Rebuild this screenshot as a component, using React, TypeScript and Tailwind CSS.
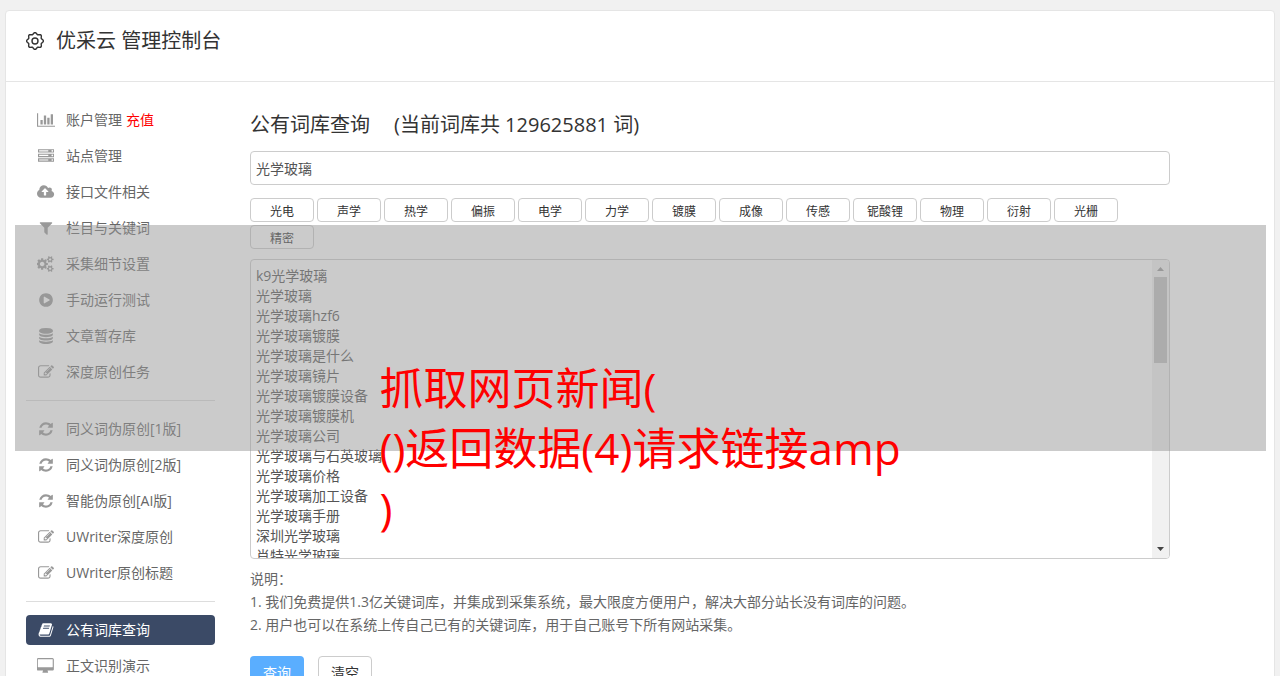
import { useState } from "react";

const icons = {
  chart:
    "M640 896v512h-256v-512h256zm384-512v1024h-256v-1024h256zm1024 1152v128h-2048v-1536h128v1408h1920zm-640-896v768h-256v-768h256zm384-384v1152h-256v-1152h256z",
  server:
    "M128 1408h1024v-128h-1024v128zm0-512h1024v-128h-1024v128zm1568 448q0-40-28-68t-68-28-68 28-28 68 28 68 68 28 68-28 28-68zm-1568-960h1024v-128h-1024v128zm1568 448q0-40-28-68t-68-28-68 28-28 68 28 68 68 28 68-28 28-68zm0-512q0-40-28-68t-68-28-68 28-28 68 28 68 68 28 68-28 28-68zm96 832v384h-1792v-384h1792zm0-512v384h-1792v-384h1792zm0-512v384h-1792v-384h1792z",
  cloud:
    "M1280 864q0-14-9-23l-352-352q-9-9-23-9t-23 9l-351 351q-10 12-10 24 0 14 9 23t23 9h224v352q0 13 9.5 22.5t22.5 9.5h192q13 0 22.5-9.5t9.5-22.5v-352h224q13 0 22.5-9.5t9.5-22.5zm640 288q0 159-112.5 271.5t-271.5 112.5h-1088q-185 0-316.5-131.500t-131.500-316.500q0-130 70-240t188-165q-2-30-2-43 0-212 150-362t362-150q156 0 285.500 87t188.500 231q71-62 166-62 106 0 181 75t75 181q0 76-41 138 130 31 213.500 135.500t83.500 238.500z",
  filter:
    "M1595 295q17 41-14 70l-493 493v742q0 42-39 59-13 5-25 5-27 0-45-19l-256-256q-19-19-19-45v-486l-493-493q-31-29-14-70 17-39 59-39h1280q42 0 59 39z",
  cogs:
    "M832 896q0-106-75-181t-181-75-181 75-75 181 75 181 181 75 181-75 75-181zm768 512q0-52-38-90t-90-38-90 38-38 90q0 53 37.500 90.500t90.500 37.500 90.500-37.500 37.500-90.500zm0-1024q0-52-38-90t-90-38-90 38-38 90q0 53 37.500 90.500t90.500 37.500 90.500-37.500 37.500-90.500zm-384 421v185q0 10-7 19.500t-16 10.500l-155 24q-11 35-32 76 34 48 90 115 7 11 7 20 0 12-7 19-23 30-82.500 89.500t-78.500 59.500q-11 0-21-7l-115-90q-37 19-77 31-11 108-23 155-7 24-30 24h-186q-11 0-20-7.500t-10-17.500l-23-153q-34-10-75-31l-118 89q-7 7-20 7-11 0-21-8-144-133-144-160 0-9 7-19 10-14 41-53t47-61q-23-44-35-82l-152-24q-10-1-17-9.500t-7-19.500v-185q0-10 7-19.500t16-10.500l155-24q11-35 32-76-34-48-90-115-7-11-7-20 0-12 7-20 22-30 82-89t79-59q11 0 21 7l115 90q34-18 77-32 11-108 23-154 7-24 30-24h186q11 0 20 7.500t10 17.500l23 153q34 10 75 31l118-89q8-7 20-7 11 0 21 8 144 133 144 160 0 8-7 19-12 16-42 54t-45 60q23 48 34 82l152 23q10 2 17 10.500t7 19.500zm640 533v140q0 16-149 31-12 27-30 52 51 113 51 138 0 4-4 7-122 71-124 71-8 0-46-47t-52-68q-20 2-30 2t-30-2q-14 21-52 68t-46 47q-2 0-124-71-4-3-4-7 0-25 51-138-18-25-30-52-149-15-149-31v-140q0-16 149-31 13-29 30-52-51-113-51-138 0-4 4-7 4-2 35-20t59-34 30-16q8 0 46 46.500t52 67.500q20-2 30-2t30 2q51-71 92-112l6-2q4 0 124 70 4 3 4 7 0 25-51 138 17 23 30 52 149 15 149 31zm0-1024v140q0 16-149 31-12 27-30 52 51 113 51 138 0 4-4 7-122 71-124 71-8 0-46-47t-52-68q-20 2-30 2t-30-2q-14 21-52 68t-46 47q-2 0-124-71-4-3-4-7 0-25 51-138-18-25-30-52-149-15-149-31v-140q0-16 149-31 13-29 30-52-51-113-51-138 0-4 4-7 4-2 35-20t59-34 30-16q8 0 46 46.500t52 67.500q20-2 30-2t30 2q51-71 92-112l6-2q4 0 124 70 4 3 4 7 0 25-51 138 17 23 30 52 149 15 149 31z",
  play:
    "M896 128q209 0 385.500 103t279.500 279.500 103 385.500-103 385.500-279.500 279.500-385.500 103-385.500-103-279.500-279.500-103-385.500 103-385.500 279.500-279.500 385.500-103zm384 823q32-18 32-55t-32-55l-544-320q-31-19-64-1-32 19-32 56v640q0 37 32 56 16 8 32 8 17 0 32-9z",
  database:
    "M896 768q237 0 443-43t325-127v170q0 69-103 128t-280 93.500-385 34.500-385-34.500-280-93.500-103-128v-170q119 84 325 127t443 43zm0 768q237 0 443-43t325-127v170q0 69-103 128t-280 93.500-385 34.500-385-34.500-280-93.500-103-128v-170q119 84 325 127t443 43zm0-384q237 0 443-43t325-127v170q0 69-103 128t-280 93.500-385 34.500-385-34.500-280-93.500-103-128v-170q119 84 325 127t443 43zm0-1152q208 0 385 34.500t280 93.500 103 128v128q0 69-103 128t-280 93.500-385 34.500-385-34.500-280-93.500-103-128v-128q0-69 103-128t280-93.500 385-34.500z",
  edit:
    "M888 1184l116-116-152-152-116 116v56h96v96h56zm440-720q-16-16-33 1l-350 350q-17 17-1 33t33-1l350-350q17-17 1-33zm80 594v190q0 119-84.500 203.500t-203.500 84.500h-832q-119 0-203.500-84.500t-84.500-203.500v-832q0-119 84.500-203.500t203.500-84.500h832q63 0 117 25 15 7 18 23 3 17-9 29l-49 49q-14 14-32 8-23-6-45-6h-832q-66 0-113 47t-47 113v832q0 66 47 113t113 47h832q66 0 113-47t47-113v-126q0-13 9-22l64-64q15-15 35-7t20 29zm-96-738l288 288-672 672h-288v-288zm444 132l-92 92-288-288 92-92q28-28 68-28t68 28l152 152q28 28 28 68t-28 68z",
  refresh:
    "M1639 1056q0 5-1 7-64 268-268 434.500t-478 166.500q-146 0-282.500-55t-243.500-157l-129 129q-19 19-45 19t-45-19-19-45v-448q0-26 19-45t45-19h448q26 0 45 19t19 45-19 45l-137 137q71 66 161 102t187 36q134 0 250-65t186-179q11-17 53-117 8-23 30-23h192q13 0 22.500 9.500t9.500 22.500zm25-800v448q0 26-19 45t-45 19h-448q-26 0-45-19t-19-45 19-45l138-138q-148-137-349-137-134 0-250 65t-186 179q-11 17-53 117-8 23-30 23h-199q-13 0-22.500-9.500t-9.500-22.500v-7q65-268 270-434.500t480-166.500q146 0 284 55.500t245 156.500l130-129q19-19 45-19t45 19 19 45z",
  book:
    "M1703 478q40 57 18 129l-275 906q-19 64-76.500 107.500t-122.500 43.500h-923q-77 0-148.500-53.500t-99.500-131.500q-24-67-2-127 0-4 3-27t4-37q1-8-3-21.500t-3-19.500q2-11 8-21t16.500-23.500 16.500-23.500q23-38 45-91.500t30-91.500q3-10 .5-30t-.5-28q3-11 17-28t17-23q21-36 42-92t25-90q1-9-2.500-32t.5-28q4-13 22-30.500t22-22.500q19-26 42.500-84.500t27.500-96.500q1-8-3-25.500t-2-26.500q2-8 9-18t18-23 17-21q8-12 16.500-30.500t15-35 16-36 19.500-32 26.500-23.500 36-11.500 47.500 5.500l-1 3q38-9 51-9h761q74 0 114 56t18 130l-274 906q-36 119-71.500 153.500t-128.500 34.500h-869q-27 0-38 15-11 16-1 43 24 70 144 70h923q29 0 56-15.500t35-41.500l300-987q7-22 5-57 38 15 59 43zm-1064 2q-4 13 2 22.500t20 9.500h608q13 0 25.500-9.500t16.500-22.500l21-64q4-13-2-22.500t-20-9.500h-608q-13 0-25.500 9.500t-16.500 22.500zm-83 256q-4 13 2 22.500t20 9.500h608q13 0 25.500-9.500t16.500-22.500l21-64q4-13-2-22.500t-20-9.500h-608q-13 0-25.500 9.500t-16.500 22.500z",
  desktop:
    "M1728 992v-832q0-13-9.500-22.500t-22.500-9.500h-1600q-13 0-22.500 9.500t-9.500 22.500v832q0 13 9.500 22.500t22.500 9.500h1600q13 0 22.500-9.500t9.500-22.500zm128-832v1088q0 66-47 113t-113 47h-544q0 37 16 77.500t32 71 16 43.500q0 26-19 45t-45 19h-512q-26 0-45-19t-19-45q0-14 16-44t32-70 16-78h-544q-66 0-113-47t-47-113v-1088q0-66 47-113t113-47h1600q66 0 113 47t47 113z",
};

// most glyphs are square, the wide ones need their own box
const iconBoxes: Partial<Record<keyof typeof icons, string>> = {
  chart: "0 0 2048 1792",
  cloud: "0 0 1920 1792",
  cogs: "0 0 1920 1792",
  desktop: "-32 0 1920 1792",
};

interface MenuItem {
  icon: keyof typeof icons;
  label: string;
  extra?: string;
}

const menu: MenuItem[][] = [
  [
    { icon: "chart", label: "账户管理", extra: "充值" },
    { icon: "server", label: "站点管理" },
    { icon: "cloud", label: "接口文件相关" },
    { icon: "filter", label: "栏目与关键词" },
    { icon: "cogs", label: "采集细节设置" },
    { icon: "play", label: "手动运行测试" },
    { icon: "database", label: "文章暂存库" },
    { icon: "edit", label: "深度原创任务" },
  ],
  [
    { icon: "refresh", label: "同义词伪原创[1版]" },
    { icon: "refresh", label: "同义词伪原创[2版]" },
    { icon: "refresh", label: "智能伪原创[AI版]" },
    { icon: "edit", label: "UWriter深度原创" },
    { icon: "edit", label: "UWriter原创标题" },
  ],
  [
    { icon: "book", label: "公有词库查询" },
    { icon: "desktop", label: "正文识别演示" },
  ],
];

const tags = [
  "光电", "声学", "热学", "偏振", "电学", "力学", "镀膜",
  "成像", "传感", "铌酸锂", "物理", "衍射", "光栅", "精密",
];

const words = [
  "k9光学玻璃",
  "光学玻璃",
  "光学玻璃hzf6",
  "光学玻璃镀膜",
  "光学玻璃是什么",
  "光学玻璃镜片",
  "光学玻璃镀膜设备",
  "光学玻璃镀膜机",
  "光学玻璃公司",
  "光学玻璃与石英玻璃",
  "光学玻璃价格",
  "光学玻璃加工设备",
  "光学玻璃手册",
  "深圳光学玻璃",
  "肖特光学玻璃",
];

function Icon({ name }: { name: keyof typeof icons }) {
  return (
    <svg viewBox={iconBoxes[name] ?? "0 0 1792 1792"} className="h-4 w-auto" fill="currentColor" fillRule="evenodd">
      <path d={icons[name]} />
    </svg>
  );
}

function GearIcon() {
  // scalloped rim with eight teeth
  const points = Array.from({ length: 96 }, (_, i) => {
    const a = (i / 96) * Math.PI * 2;
    const r = 7.6 + 0.8 * Math.cos(a * 8);
    return `${(9 + r * Math.cos(a)).toFixed(2)},${(9 + r * Math.sin(a)).toFixed(2)}`;
  }).join(" ");

  return (
    <svg viewBox="0 0 18 18" className="h-[18px] w-[18px]" fill="none" stroke="currentColor" strokeWidth="1.4">
      <polygon points={points} />
      <circle cx="9" cy="9" r="3" />
    </svg>
  );
}

export default function App() {
  const [keyword, setKeyword] = useState("光学玻璃");
  const [result, setResult] = useState(words.join("\n"));
  const [active, setActive] = useState("公有词库查询");

  const clear = () => {
    setKeyword("");
    setResult("");
  };

  return (
    <div className="relative h-screen overflow-hidden bg-[#f1f1f1] px-[5px] pt-[10px] font-['Open_Sans','Noto_Sans_CJK_SC',sans-serif] text-sm text-[#555]">
      <div className="min-h-screen rounded border border-[#e5e5e5] bg-white">
        <header className="flex items-center gap-3 border-b border-[#e5e5e5] px-5 pt-4 pb-[26px] text-[#333]">
          <GearIcon />
          <h1 className="text-xl leading-7">优采云 管理控制台</h1>
        </header>

        <div className="flex gap-[35px] px-5 pt-[23px]">
          {/* Sidebar */}
          <nav className="w-[189px] shrink-0">
            {menu.map((group, i) => (
              <div key={i}>
                {i > 0 && <hr className="mt-[13px] mb-[13px] border-[#ddd]" />}
                <div className="flex flex-col gap-[6px]">
                  {group.map((item) => (
                    <a
                      key={item.label}
                      href="#"
                      onClick={() => setActive(item.label)}
                      className={`flex h-[30px] items-center rounded px-[10px] ${
                        active === item.label ? "bg-[#3b4a66] text-white" : "text-[#666]"
                      }`}
                    >
                      <span
                        className={`mr-[10px] flex w-5 justify-center ${
                          active === item.label ? "text-white" : "text-[#999]"
                        }`}
                      >
                        <Icon name={item.icon} />
                      </span>
                      {item.label}
                      {item.extra && <span className="ml-1 text-[#f00]">{item.extra}</span>}
                    </a>
                  ))}
                </div>
              </div>
            ))}
          </nav>

          {/* Main */}
          <main className="max-w-[920px] min-w-0 flex-1 pt-[6px]">
            <h2 className="flex gap-6 text-xl leading-7 text-[#333]">
              <label htmlFor="keyword">公有词库查询</label>
              <span>(当前词库共 129625881 词)</span>
            </h2>

            <input
              id="keyword"
              value={keyword}
              onChange={(e) => setKeyword(e.target.value)}
              className="mt-3 block h-[34px] w-full rounded border border-[#ccc] bg-white px-[5px]"
            />

            <div className="mt-[13px] flex flex-wrap gap-[3px]">
              {tags.map((tag) => (
                <button
                  key={tag}
                  onClick={() => setKeyword(tag)}
                  className="h-6 w-16 rounded border border-[#ccc] bg-white pt-[3px] text-xs text-[#333]"
                >
                  {tag}
                </button>
              ))}
            </div>

            <div className="mt-[10px] flex h-[300px] overflow-hidden rounded border border-[#ccc]">
              <textarea
                aria-label="查询结果"
                value={result}
                onChange={(e) => setResult(e.target.value)}
                className="flex-1 resize-none overflow-hidden px-[5px] pt-[6px] leading-5"
              />
              <div className="flex w-[17px] flex-col items-center justify-between bg-[#f1f1f1] py-[7px]">
                <div className="flex flex-col items-center gap-[6px]">
                  <svg viewBox="0 0 7 4" className="h-1 w-[7px]" fill="#999">
                    <path d="M0 4L3.500 0L7 4z" />
                  </svg>
                  <div className="h-[86px] w-[13px] bg-[#c1c1c1]" />
                </div>
                <svg viewBox="0 0 7 4" className="h-1 w-[7px]" fill="#444">
                  <path d="M0 0L3.500 4L7 0z" />
                </svg>
              </div>
            </div>

            <div className="mt-2 leading-[23px] text-[#666]">
              <p>说明：</p>
              <p>1. 我们免费提供1.3亿关键词库，并集成到采集系统，最大限度方便用户，解决大部分站长没有词库的问题。</p>
              <p>2. 用户也可以在系统上传自己已有的关键词库，用于自己账号下所有网站采集。</p>
            </div>

            <div className="mt-5 flex gap-[14px]">
              <button className="h-[34px] w-[54px] rounded bg-[#5aaeff] text-white">查询</button>
              <button onClick={clear} className="h-[34px] w-[54px] rounded border border-[#ccc] bg-white text-[#333]">
                清空
              </button>
            </div>
          </main>
        </div>
      </div>

      {/* Caption banner */}
      <div className="pointer-events-none absolute top-[225px] right-[14px] left-[15px] h-[226px] bg-[#979797]/50" />
      <div className="pointer-events-none absolute inset-x-0 top-[358px] flex justify-center">
        <p className="text-[44px] leading-[60px] text-[#f00]">
          抓取网页新闻(
          <br />
          ()返回数据(4)请求链接amp
          <br />)
        </p>
      </div>
    </div>
  );
}
